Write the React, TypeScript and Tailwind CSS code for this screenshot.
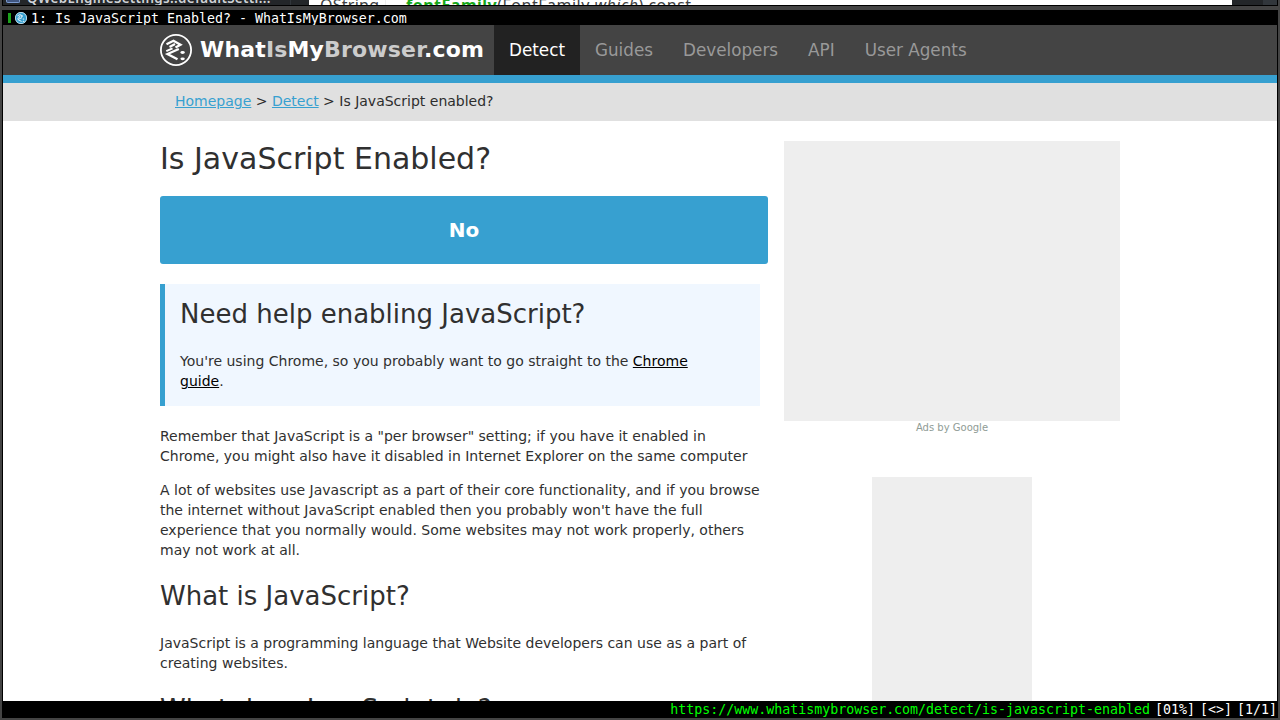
import React from "react";

const navItems = ["Guides", "Developers", "API", "User Agents"];

function Logo({ className }: { className: string }) {
  return (
    <svg className={className} viewBox="0 0 32 32" fill="none" stroke="white">
      <circle cx="16" cy="16" r="15.1" strokeWidth="1.8" />
      <path d="M6.5 10.3 L13.5 6.8 L20.5 10.8 L15.5 13.6" strokeWidth="2.3" />
      <path d="M9.5 13 L15 10" strokeWidth="2.1" />
      <path d="M18.8 15 L7.5 20 L17.5 25.3" strokeWidth="2.3" />
      <path d="M6.3 17.2 L12.5 14.4" strokeWidth="2" />
      <ellipse cx="22.6" cy="18.5" rx="2.2" ry="1.4" fill="white" stroke="none" />
      <ellipse cx="22.6" cy="24.8" rx="2.2" ry="1.4" fill="white" stroke="none" />
    </svg>
  );
}

function BackgroundWindows() {
  return (
    <div className="mx-[2px] flex h-[6px] shrink-0 overflow-hidden border-x border-b border-black bg-[#232629] font-['Noto_Sans',sans-serif]">
      <div className="flex h-[5px] w-[306px] overflow-hidden bg-[#232629]">
        <div className="flex h-[5px] w-[288px] border-r border-[#31363b]">
          <div className="ml-[3px] h-[3px] w-[14px] shrink-0 rounded-b-[2px] border-x border-b border-[#7b9bd0] bg-[#405681]" />
          <span className="-mt-[11px] ml-[7px] w-[245px] shrink-0 whitespace-nowrap text-[13.4px] font-semibold leading-[18px] tracking-[0.33px] text-[#d0d3d6]">QWebEngineSettings::defaultSetti...</span>
        </div>
      </div>
      <div className="flex h-[5px] w-[923px] overflow-hidden bg-white">
        <span className="-mt-[6px] ml-[11px] h-[22px] w-[66px] border-r border-[#eee] text-[16px] leading-[22px] tracking-[0.25px] text-[#404244]">QString</span>
        <span className="-mt-[6px] ml-[20px] h-[22px] whitespace-nowrap text-[16px] leading-[22px] tracking-[0.5px] text-[#404244]">
          <b className="text-[#17a81a]">fontFamily</b>(FontFamily <i>which</i>) const
        </span>
      </div>
      <div className="h-[5px] w-[31px] bg-[#232629]" />
      <div className="h-[5px] flex-1 bg-[#31363b]" />
    </div>
  );
}

function TabBar() {
  return (
    <div className="flex h-[15px] shrink-0 items-center bg-black pl-[5px] font-['DejaVu_Sans_Mono',monospace] text-[13.29px] leading-[15px] text-white">
      <span className="h-[10px] w-[3px] bg-[#1ca11c]" />
      <span className="ml-[4px] flex size-[12px] rounded-full bg-[#37a0d0]">
        <Logo className="size-[12px]" />
      </span>
      <span className="ml-[4px] mt-px whitespace-pre">1: Is JavaScript Enabled? - WhatIsMyBrowser.com</span>
    </div>
  );
}

function Header() {
  return (
    <header className="h-[58px] shrink-0 border-b-8 border-[#37a0d0] bg-[#444]">
      <div className="ml-[157px] flex h-[50px] items-center">
        <Logo className="size-8" />
        <div className="ml-2 w-[294px] whitespace-nowrap text-[22px] font-bold leading-[50px] tracking-[0.16px] text-white">
          What<span className="text-[#ccc]">Is</span>My<span className="text-[#ccc]">Browser</span>.com
        </div>
        <nav className="flex text-[16.8px] leading-[50px] text-[#999]">
          <a className="bg-[#222] px-[15px] text-white">Detect</a>
          {navItems.map((item) => (
            <a key={item} className="px-[15px]">{item}</a>
          ))}
        </nav>
      </div>
    </header>
  );
}

function Article() {
  return (
    <main className="w-[608px]">
      <h1 className="mt-[18px] text-[30px] leading-[40px]">Is JavaScript Enabled?</h1>
      <div className="mt-[17px] h-[68px] rounded-[3px] bg-[#37a0d0] text-center text-[20px] font-bold leading-[68px] text-white">No</div>
      <section className="mt-5 h-[122px] w-[600px] border-l-[5px] border-[#37a0d0] bg-[#f0f7ff] px-[15px]">
        <h2 className="pt-[13px] text-[26px] leading-[35px]">Need help enabling JavaScript?</h2>
        <p className="mt-[19px]">
          You're using Chrome, so you probably want to go straight to the <a className="text-black underline">Chrome<br />guide</a>.
        </p>
      </section>
      <p className="mt-5 w-[608px]">
        Remember that JavaScript is a "per browser" setting; if you have it enabled in<br />
        Chrome, you might also have it disabled in Internet Explorer on the same computer
      </p>
      <p className="mt-[14px] w-[608px]">
        A lot of websites use Javascript as a part of their core functionality, and if you browse<br />
        the internet without JavaScript enabled then you probably won't have the full<br />
        experience that you normally would. Some websites may not work properly, others<br />
        may not work at all.
      </p>
      <h2 className="mt-[19px] text-[26px] leading-[35px]">What is JavaScript?</h2>
      <p className="mt-[19px]">
        JavaScript is a programming language that Website developers can use as a part of<br />
        creating websites.
      </p>
      <h2 className="mt-[19px] text-[26px] leading-[35px]">What does JavaScript do?</h2>
    </main>
  );
}

function StatusBar() {
  return (
    <footer className="flex h-[17px] shrink-0 justify-end gap-[2px] whitespace-pre bg-black font-['DejaVu_Sans_Mono',monospace] text-[13.29px] leading-[18px] text-white">
      <span className="mr-[3px] text-[#0f0]">https://www.whatismybrowser.com/detect/is-javascript-enabled</span>
      <span className="w-[43px]">[01%]</span>
      <span className="w-[35px]">[&lt;&gt;]</span>
      <span className="w-[40px]">[1/1]</span>
    </footer>
  );
}

export default function App() {
  return (
    <div className="flex h-[720px] w-[1280px] flex-col overflow-hidden bg-[#444] font-['DejaVu_Sans',sans-serif] text-[14px] leading-5 text-[#2d2d2d]">
      <BackgroundWindows />
      <div className="mx-[2px] mt-[4px] flex h-[708px] shrink-0 flex-col overflow-hidden border-x border-black">
        <TabBar />
        <Header />
        <div className="h-[38px] shrink-0 bg-[#e0e0e0] pl-[172px] leading-[36px]">
          <a className="text-[#37a0d0] underline">Homepage</a> &gt; <a className="text-[#37a0d0] underline">Detect</a> &gt; Is JavaScript enabled?
        </div>
        <div className="flex h-[580px] shrink-0 overflow-hidden bg-white pl-[157px] text-[#303030]">
          <Article />
          <aside className="ml-4 flex w-[336px] flex-col items-center pt-5">
            <div className="h-[280px] w-[336px] shrink-0 bg-[#eee]" />
            <span className="h-[56px] shrink-0 text-[10px] leading-[14px] text-[#8f9c96]">Ads by Google</span>
            <div className="h-[600px] w-[160px] shrink-0 bg-[#eee]" />
          </aside>
        </div>
        <StatusBar />
      </div>
    </div>
  );
}
